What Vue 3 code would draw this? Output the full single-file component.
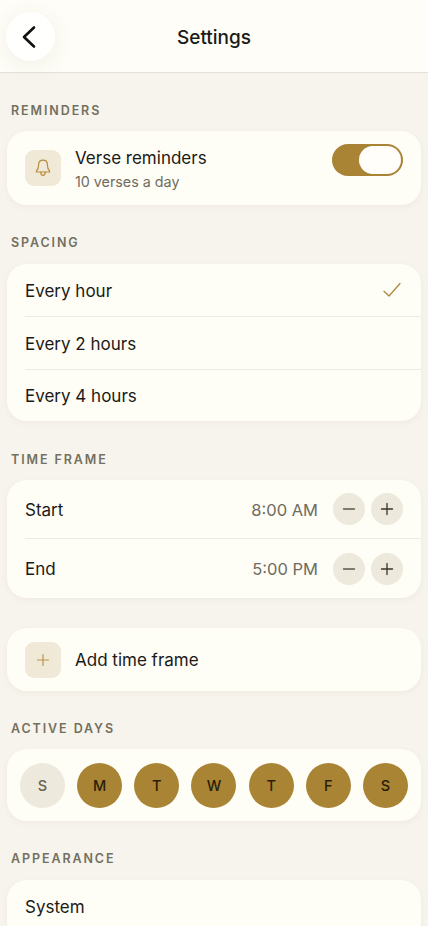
<script setup>
const spacing = [
  { label: 'Every hour', selected: true },
  { label: 'Every 2 hours', selected: false },
  { label: 'Every 4 hours', selected: false },
];

const timeFrame = [
  { label: 'Start', time: '8:00 AM' },
  { label: 'End', time: '5:00 PM' },
];

const days = [
  { id: 'sun', label: 'S', active: false },
  { id: 'mon', label: 'M', active: true },
  { id: 'tue', label: 'T', active: true },
  { id: 'wed', label: 'W', active: true },
  { id: 'thu', label: 'T', active: true },
  { id: 'fri', label: 'F', active: true },
  { id: 'sat', label: 'S', active: true },
];
</script>

<template>
  <div class="page">
    <header class="header">
      <button class="back" aria-label="Back">
        <svg width="18" height="24" viewBox="0 0 18 24" fill="none">
          <path d="M14 2.5 4 12l10 9.5" stroke="#111" stroke-width="2.6" stroke-linecap="round" stroke-linejoin="round" />
        </svg>
      </button>
      <h1 class="title">Settings</h1>
    </header>

    <main class="content">
      <h2 class="label">REMINDERS</h2>
      <section class="card reminder">
        <div class="tile">
          <svg width="16" height="18" viewBox="0 0 16 18" fill="none" stroke="#b58c3a" stroke-width="1.2" stroke-linecap="round" stroke-linejoin="round">
            <path d="M8 1.2c-2.7 0-4.4 2-4.4 4.6 0 3.2-.8 5-2.2 6.4-.3.3-.1.8.3.8h12.6c.4 0 .6-.5.3-.8-1.4-1.4-2.2-3.2-2.2-6.4C12.400 3.200 10.700 1.200 8 1.200Z" />
            <path d="M5.800 13.200c0 1.900 1 3.200 2.200 3.200s2.200-1.300 2.200-3.200" />
          </svg>
        </div>
        <div class="reminder-text">
          <div class="row-title">Verse reminders</div>
          <div class="row-sub">10 verses a day</div>
        </div>
        <div class="toggle"><span class="knob"></span></div>
      </section>

      <h2 class="label gap spaced">SPACING</h2>
      <section class="card">
        <div v-for="item in spacing" :key="item.label" class="row spacing-row">
          <span class="row-title">{{ item.label }}</span>
          <svg v-if="item.selected" class="check" width="18" height="16" viewBox="0 0 18 16" fill="none">
            <path d="M1 9.200 6 14 17 1.500" stroke="#a9843a" stroke-width="1.200" stroke-linecap="round" stroke-linejoin="round" />
          </svg>
        </div>
      </section>

      <h2 class="label gap time-label">TIME FRAME</h2>
      <section class="card">
        <div v-for="item in timeFrame" :key="item.label" class="row time-row">
          <span class="row-title">{{ item.label }}</span>
          <span class="time">{{ item.time }}</span>
          <button class="step minus" aria-label="Decrease">
            <svg width="14" height="14" viewBox="0 0 14 14"><path d="M1.500 7h11" stroke="#5b5547" stroke-width="1.300" stroke-linecap="round" /></svg>
          </button>
          <button class="step" aria-label="Increase">
            <svg width="14" height="14" viewBox="0 0 14 14"><path d="M1.500 7h11M7 1.500v11" stroke="#3a3528" stroke-width="1.300" stroke-linecap="round" /></svg>
          </button>
        </div>
      </section>

      <section class="card add">
        <div class="tile">
          <svg width="14" height="14" viewBox="0 0 14 14"><path d="M1.500 7h11M7 1.500v11" stroke="#bb954b" stroke-width="1.200" stroke-linecap="round" /></svg>
        </div>
        <span class="row-title">Add time frame</span>
      </section>

      <h2 class="label gap">ACTIVE DAYS</h2>
      <section class="card days">
        <span
          v-for="day in days"
          :key="day.id"
          :class="['day', day.active && 'on']"
        >{{ day.label }}</span>
      </section>

      <h2 class="label gap spaced">APPEARANCE</h2>
      <section class="card appearance-card">
        <div class="row system-row"><span class="row-title">System</span></div>
      </section>
    </main>
  </div>
</template>

<style scoped>
.page {
  width: 428px;
  height: 926px;
  overflow: hidden;
  background: #f7f4ed;
  font-family: Inter, "Liberation Sans", sans-serif;
  color: #1b1a16;
}

.header {
  position: relative;
  display: flex;
  align-items: center;
  justify-content: center;
  height: 72px;
  background: #fefdf7;
  border-bottom: 1px solid #e5e0d6;
}

.back {
  position: absolute;
  left: 6px;
  top: 12px;
  display: flex;
  align-items: center;
  justify-content: center;
  width: 49px;
  height: 49px;
  padding: 0 3px 0 0;
  border: 0;
  border-radius: 50%;
  background: #fffffd;
  box-shadow: 0 4px 22px rgba(90, 75, 40, 0.08);
}

.title {
  margin: 0;
  padding-top: 3px;
  font-size: 19px;
  font-weight: 550;
  line-height: 24px;
}

.content {
  padding: 30px 7px 0;
}

.label {
  margin: 0 0 12px 4px;
  font-size: 12.500px;
  font-weight: 600;
  line-height: 16px;
  letter-spacing: 1.900px;
  color: #73705f;
}

.label.gap {
  margin-top: 30px;
}

.label.spaced {
  margin-bottom: 13px;
}

.label.time-label {
  margin-top: 31px;
}

.card {
  border-radius: 20px;
  background: #fefdf6;
  box-shadow: 0 2px 6px rgba(90, 75, 40, 0.05);
}

.tile {
  display: flex;
  align-items: center;
  justify-content: center;
  flex: none;
  width: 36px;
  height: 36px;
  border-radius: 9px;
  background: #f1e9d8;
}

.reminder {
  display: flex;
  align-items: center;
  height: 74px;
  padding: 0 18px;
}

.reminder-text {
  flex: 1;
  margin-left: 14px;
  padding-top: 1px;
}

.row-title {
  font-size: 17px;
  line-height: 22px;
  color: #1b1a16;
}

.row-sub {
  margin-top: 4px;
  font-size: 14.300px;
  line-height: 18px;
  color: #6f6c5f;
}

.toggle {
  align-self: flex-start;
  box-sizing: border-box;
  width: 71px;
  height: 32px;
  margin: 13px 0 0;
  padding: 2px 2px 2px 27px;
  border-radius: 16px;
  background: #a98435;
}

.knob {
  display: block;
  width: 42px;
  height: 28px;
  border-radius: 14px;
  background: #fffefb;
}

.row {
  display: flex;
  align-items: center;
  margin-left: 18px;
  padding-right: 18px;
  border-bottom: 1px solid #efebe0;
}

.row:last-child {
  border-bottom: 0;
}

.spacing-row {
  justify-content: space-between;
  height: 52px;
}

.spacing-row .row-title {
  padding-top: 1px;
}

.spacing-row:last-child {
  height: 51px;
}

.check {
  margin-right: 2px;
}

.time-row {
  height: 58px;
}

.time-row:last-child {
  height: 59px;
}

.time-row .row-title {
  flex: 1;
  padding-top: 1px;
}

.time {
  margin-right: 15px;
  padding-top: 1px;
  font-size: 16.500px;
  color: #6f6c5f;
}

.step {
  display: flex;
  align-items: center;
  justify-content: center;
  width: 32px;
  height: 32px;
  padding: 0;
  border: 0;
  border-radius: 50%;
  background: #eee9dd;
}

.step.minus {
  margin-right: 6px;
}

.add {
  display: flex;
  align-items: center;
  gap: 14px;
  height: 63px;
  margin-top: 30px;
  padding: 0 18px;
}

.days {
  display: flex;
  justify-content: space-between;
  align-items: center;
  height: 72px;
  padding: 0 13px;
}

.day {
  display: flex;
  align-items: center;
  justify-content: center;
  width: 45px;
  height: 45px;
  border-radius: 50%;
  background: #eee9dd;
  font-size: 14.500px;
  font-weight: 550;
  color: #6a6554;
}

.day.on {
  background: #a98435;
  color: #2a1e08;
}

.appearance-card {
  height: 70px;
}

.system-row {
  height: 53px;
}
</style>
